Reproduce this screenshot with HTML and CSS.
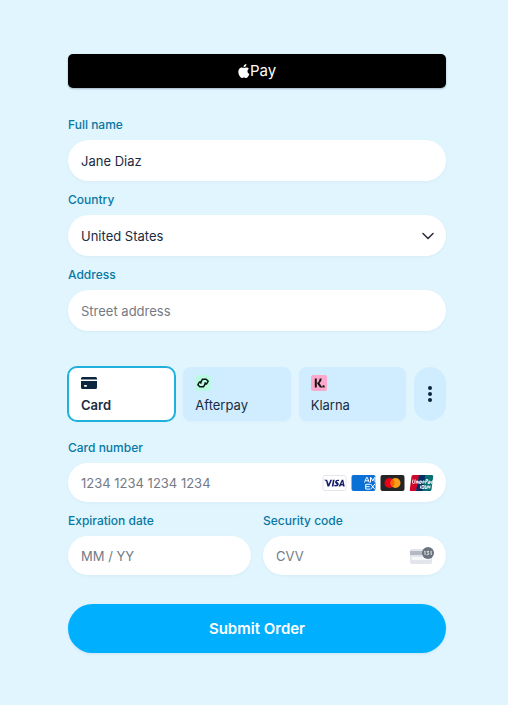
FILE: index.html
```html
<!DOCTYPE html>
<html lang="en">
<head>
<meta charset="utf-8">
<meta name="viewport" content="width=device-width, initial-scale=1">
<title>Checkout</title>
<link rel="stylesheet" href="styles.css">
</head>
<body>
<form class="checkout">
  <button class="apple-pay" type="button" aria-label="Apple Pay">
    <svg class="apple-logo" viewBox="0 0 24 28" aria-hidden="true"><path fill="#fff" d="M16.8 0c.2 1.700-.5 3.300-1.500 4.500-1.100 1.300-2.600 2.100-4.100 2-.2-1.600.6-3.300 1.500-4.300C13.800.9 15.500.1 16.800 0zM21.800 9.500c-1.700 1.100-2.800 2.700-2.800 4.900 0 2.500 1.500 4.500 3.800 5.400-.6 1.900-1.700 4-3 5.700-1.100 1.500-2.200 2.400-3.800 2.400-1.500 0-2.100-.9-4-.9s-2.600.9-4 .9c-1.600.1-2.900-1.200-4-2.800C.8 21.200-.7 14.700 2 10.500c1.300-2.200 3.500-3.500 5.700-3.500 1.700 0 3.200 1.100 4.300 1.100 1 0 2.900-1.300 5-1.100 1.700.1 3.600.8 4.800 2.500z"/></svg>
    <span>Pay</span>
  </button>

  <div class="field">
    <label for="name">Full name</label>
    <div class="control"><input id="name" type="text" value="Jane Diaz"></div>
  </div>
  <div class="field">
    <label for="country">Country</label>
    <div class="control">
      <select id="country"><option>United States</option></select>
      <svg class="chevron" viewBox="0 0 12 8" aria-hidden="true"><path d="M1 1.500l5 5 5-5" fill="none" stroke="#30313d" stroke-width="1.600" stroke-linecap="round" stroke-linejoin="round"/></svg>
    </div>
  </div>
  <div class="field">
    <label for="address">Address</label>
    <div class="control"><input id="address" type="text" placeholder="Street address"></div>
  </div>

  <div class="methods">
    <button class="method selected" type="button" aria-pressed="true">
      <svg class="method-icon" viewBox="0 0 16 16" aria-hidden="true"><path fill="#0a2540" d="M1.500 2h13A1.500 1.500 0 0 1 16 3.500V4.500H0V3.500A1.500 1.500 0 0 1 1.500 2zM0 6h16v6.500a1.500 1.500 0 0 1-1.500 1.500h-13A1.500 1.500 0 0 1 0 12.500z"/><rect x="3" y="10" width="3" height="1.800" rx=".8" fill="#fff"/></svg>
      <span>Card</span>
    </button>
    <button class="method" type="button" aria-pressed="false">
      <svg class="method-icon" viewBox="0 0 16 16" aria-hidden="true"><rect width="16" height="16" rx="3" fill="#b8fbe2"/><g fill="none" stroke="#0b1512" stroke-width="1.500" stroke-linejoin="round"><path d="M6.200 8.600L5.600 7.600 7.500 4.200H11.200L13.200 6.200 11.600 9H9.800"/><path d="M9.800 7.400L10.400 8.400 8.500 11.800H4.800L2.800 9.800 4.400 7H6.200"/></g></svg>
      <span>Afterpay</span>
    </button>
    <button class="method" type="button" aria-pressed="false">
      <svg class="method-icon" viewBox="0 0 16 16" aria-hidden="true"><rect width="16" height="16" rx="2" fill="#ffa8cd"/><path fill="#17120f" d="M3.800 3.500h2v9h-2zM8.600 3.500h2c0 2-.9 3.500-2.200 4.500l3 4.500H9L6 8.200c1.600-1 2.600-2.700 2.600-4.700z"/><circle cx="12.500" cy="11.400" r="1.200" fill="#17120f"/></svg>
      <span>Klarna</span>
    </button>
    <button class="more" type="button" aria-label="More payment methods">
      <svg viewBox="0 0 4 18" aria-hidden="true"><g fill="#0a2540"><circle cx="2" cy="3" r="2"/><circle cx="2" cy="9" r="2"/><circle cx="2" cy="15" r="2"/></g></svg>
    </button>
  </div>

  <div class="field">
    <label for="number">Card number</label>
    <div class="control compact">
      <input id="number" type="text" inputmode="numeric" placeholder="1234 1234 1234 1234">
      <div class="brands">
        <svg viewBox="0 0 24 16" role="img" aria-label="Visa"><rect x=".5" y=".5" width="23" height="15" rx="2" fill="#fff" stroke="#e3e5ee"/><path fill="#171e6c" d="M1.600 4.800h3L6.200 9l1.600-4.200h1.800L6.700 11.400H5L3.600 6.200C3 5.700 2.300 5.300 1.600 5zM10.400 4.800h1.700L11 11.400H9.300zM16.700 5l-.3 1.300c-1-.4-2-.3-2 .2 0 .7 2 .9 1.800 2.700-.2 2.200-2.700 2.600-4.600 1.900l.3-1.400c1.200.6 2.500.5 2.500-.1 0-.8-2-.9-1.800-2.700.2-1.900 2.300-2.600 4.100-1.900zM19.300 4.800h1.500l1.400 6.600h-1.600l-.2-1h-2.100l-.4 1h-1.800zM19.800 6.700l-.9 2.400h1.300z"/></svg>
        <svg viewBox="0 0 24 16" role="img" aria-label="American Express"><rect width="24" height="16" rx="2" fill="#0a70d6"/><g fill="none" stroke="#fff" stroke-width="1"><path d="M13 7.500l2-5h.8l2 5M14 5.800h3M19 7.500v-5h.5L21.300 6l1.800-3.500h.9M23.600 3v4.500M18.500 9.300h-4.300v4.800h4.300M14.200 11.700h4M19 9l4.500 5.400M23.500 9L19 14.400"/></g></svg>
        <svg viewBox="0 0 24 16" role="img" aria-label="Mastercard"><rect width="24" height="16" rx="2" fill="#252525"/><circle cx="9" cy="8" r="5" fill="#eb001b"/><circle cx="15" cy="8" r="5" fill="#f79e1b"/><path fill="#ff5f00" d="M12 4a5 5 0 0 1 0 8 5 5 0 0 1 0-8z"/></svg>
        <svg viewBox="0 0 24 16" role="img" aria-label="UnionPay"><path fill="#d10429" d="M3.500 0H10L7 16H1.500Q0 16 .3 14.500L2 1.500Q2.200 0 3.500 0z"/><path fill="#022e64" d="M9.500 0h7l-3 16h-7z"/><path fill="#076f74" d="M16 0h6.500Q24 0 23.700 1.500L22 14.500q-.2 1.500-1.500 1.500H13z"/><g fill="none" stroke="#fff" stroke-width=".9"><path d="M3.500 4.500L3 7.500q0 1 1 1t1.200-1l.5-3M6.500 8.500L7 6h1.200l-.5 2.500M9.500 5.800L9 8.500M10.500 6h1.500l-.5 2.500H10zM13 8.500l.5-2.500h1.200l-.5 2.500M16 8.500l.7-4h1.500q1 1.800-1.800 2M19 6.200h1.500L20 8.500h-1.500l.2-1.200h1.500M21.500 6v2.300h1L23 5.500M11.300 10.500l-.5 3M12.700 10.500h2l-.4 3h-2zM16 10.500l-.5 3h1.700l.5-3M18.800 10.500l-.5 3M18.500 12h2M20.700 10.500l-.5 3"/></g></svg>
      </div>
    </div>
  </div>
  <div class="row">
    <div class="field">
      <label for="expiry">Expiration date</label>
      <div class="control compact"><input id="expiry" type="text" placeholder="MM / YY"></div>
    </div>
    <div class="field">
      <label for="cvv">Security code</label>
      <div class="control compact">
        <input id="cvv" type="text" inputmode="numeric" placeholder="CVV">
        <svg class="cvv-icon" viewBox="0 0 24 18" aria-hidden="true"><rect x="0" y="2" width="22" height="15" rx="2" fill="#e2e5e9"/><path fill="#b4bac1" d="M0 4h16v4H0z"/><path fill="#f6f7f8" d="M1.500 10h19v3h-19z"/><circle cx="18" cy="6" r="6" fill="#6b737f"/><path d="M14.200 4.800l.8-.6v3.800M16.700 4.300h2L17.600 5.700q1.300 0 1.300 1.100T16.600 7.800M20.400 4.800l.8-.6v3.800" fill="none" stroke="#fff" stroke-width=".8"/></svg>
      </div>
    </div>
  </div>

  <button class="submit" type="submit">Submit Order</button>
</form>
</body>
</html>
```
FILE: styles.css
```css
* {
  box-sizing: border-box;
}

body {
  margin: 0;
  background: #e1f5fe;
  color: #1a2b42;
  font-family: Inter, "Liberation Sans", sans-serif;
  font-size: 13px;
  line-height: 20px;
}

button,
input,
select {
  margin: 0;
  border: 0;
  padding: 0;
  color: inherit;
  font: inherit;
}

.checkout {
  display: flex;
  flex-direction: column;
  gap: 9px;
  padding: 54px 62px 52px 68px;
}

.apple-pay {
  display: flex;
  align-items: center;
  justify-content: center;
  height: 34px;
  margin-bottom: 18px;
  border-radius: 5px;
  background: #000;
  color: #fff;
  font-size: 15px;
  box-shadow: 0 1px 2px rgba(0, 40, 70, 0.3);
}

.apple-logo {
  width: 12px;
  height: 14px;
}

.field {
  display: flex;
  flex-direction: column;
  gap: 5px;
  min-width: 0;
}

.field label {
  color: #0878a4;
  font-size: 12px;
  font-weight: 500;
}

.control {
  display: flex;
  align-items: center;
  height: 41px;
  padding: 0 12px 0 13px;
  border-radius: 21px;
  background: #fff;
  box-shadow: 0 1px 3px rgba(0, 80, 120, 0.06);
}

.control.compact {
  height: 39px;
}

.control input,
.control select {
  flex: 1;
  min-width: 0;
  height: 39px;
  background: transparent;
  outline: 0;
  appearance: none;
}

.control input::placeholder {
  color: #747a85;
  opacity: 1;
}

.chevron {
  width: 12px;
  height: 8px;
  pointer-events: none;
}

.methods {
  display: grid;
  grid-template-columns: repeat(3, 1fr) 32px;
  gap: 8px;
  margin: 27px 0 8px;
}

.method {
  display: flex;
  flex-direction: column;
  align-items: flex-start;
  justify-content: flex-end;
  gap: 4px;
  height: 54px;
  padding: 0 12px 6px;
  border-radius: 8px;
  background: #d0edff;
  box-shadow: 0 1px 3px rgba(0, 80, 120, 0.04);
}

.method.selected {
  padding-left: 13px;
  border-radius: 9px;
  background: #fff;
  font-weight: 600;
  outline: 2px solid #20b0dc;
  outline-offset: -1px;
}

.method-icon {
  width: 16px;
  height: 16px;
}

.more {
  display: grid;
  place-items: center;
  border-radius: 16px;
  background: #d0edff;
}

.more svg {
  width: 4px;
  height: 18px;
}

.brands {
  display: flex;
  gap: 4px;
}

.brands svg {
  width: 25px;
  height: 16px;
}

.row {
  display: grid;
  grid-template-columns: 1fr 1fr;
  gap: 12px;
}

.cvv-icon {
  width: 24px;
  height: 18px;
}

.submit {
  height: 49px;
  margin-top: 20px;
  border-radius: 25px;
  background: #00b0ff;
  color: #fff;
  font-size: 15px;
  font-weight: 600;
  box-shadow: 0 1px 3px rgba(0, 80, 120, 0.1);
}
```
